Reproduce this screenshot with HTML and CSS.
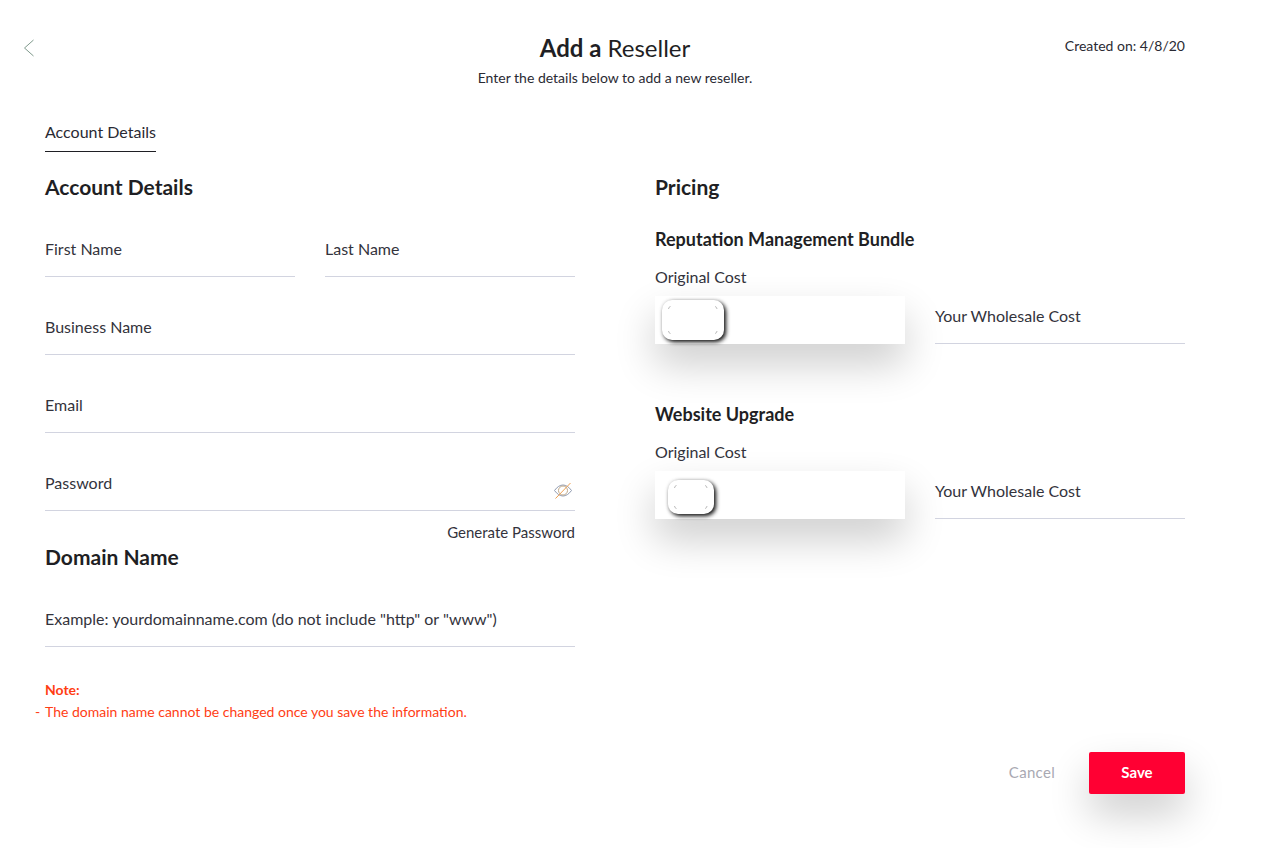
FILE: index.html
```html
<!DOCTYPE html>
<html lang="en">
<head>
<meta charset="utf-8">
<title>Add a Reseller</title>
<link rel="stylesheet" href="styles.css">
</head>
<body>
<div class="page">
  <a class="back" aria-label="Back">
    <svg width="12" height="18" viewBox="0 0 12 18"><path d="M10.500 1 L1.500 9 L10.500 17" fill="none" stroke="#7f9a8c" stroke-width="1"/></svg>
  </a>
  <header class="header">
    <h1 class="title"><b>Add a</b> Reseller</h1>
    <p class="subtitle">Enter the details below to add a new reseller.</p>
    <span class="created">Created on: 4/8/20</span>
  </header>
  <nav class="tabs"><span class="tab">Account Details</span></nav>
  <main class="columns">
    <section class="col">
      <h2 class="h2">Account Details</h2>
      <div class="row two">
        <div class="field">First Name</div>
        <div class="field">Last Name</div>
      </div>
      <div class="row"><div class="field">Business Name</div></div>
      <div class="row"><div class="field">Email</div></div>
      <div class="row">
        <div class="field">Password
          <svg class="eye" width="20" height="18" viewBox="0 0 20 18"><path d="M1.500 9.500 C4 6 7 4 10 4 C13 4 16 6 18.500 9.500 C16 13 13 15 10 15 C7 15 4 13 1.500 9.500 Z" fill="none" stroke="#8f9ab0" stroke-width="1"/><circle cx="10" cy="9.500" r="4.500" fill="none" stroke="#c0a888" stroke-width="1"/><path d="M2.500 17.500 L17.500 2" stroke="#f0a050" stroke-width="1"/></svg>
        </div>
      </div>
      <a class="generate">Generate Password</a>
      <h2 class="h2 domain">Domain Name</h2>
      <div class="row domain-row"><div class="field">Example: yourdomainname.com (do not include "http" or "www")</div></div>
      <div class="note">
        <strong class="note-title">Note:</strong>
        <p class="note-line">The domain name cannot be changed once you save the information.</p>
      </div>
    </section>
    <section class="col">
      <h2 class="h2">Pricing</h2>
      <div class="product">
        <h3 class="h3">Reputation Management Bundle</h3>
        <div class="cost-label">Original Cost</div>
        <div class="cost-row">
          <div class="cost-box">
            <div class="knob knob-a">
              <svg class="marks" viewBox="0 0 62 40" width="62" height="40"><path d="M6.500 9 Q6.500 7 8.500 6.500M53 6.500 Q55 7 55 9M6.500 31 Q6.500 33 8.500 33.500M55 31 Q55 33 53 33.500" fill="none" stroke="#bbb" stroke-width="1"/></svg>
            </div>
          </div>
          <div class="field">Your Wholesale Cost</div>
        </div>
      </div>
      <div class="product second">
        <h3 class="h3">Website Upgrade</h3>
        <div class="cost-label">Original Cost</div>
        <div class="cost-row">
          <div class="cost-box">
            <div class="knob knob-b">
              <svg class="marks" viewBox="0 0 46 34" width="46" height="34"><path d="M6.500 8 Q6.500 6 8.500 5.500M37 5.500 Q39 6 39 8M6.500 26 Q6.500 28 8.500 28.500M39 26 Q39 28 37 28.500" fill="none" stroke="#bbb" stroke-width="1"/></svg>
            </div>
          </div>
          <div class="field">Your Wholesale Cost</div>
        </div>
      </div>
    </section>
  </main>
  <footer class="actions">
    <a class="cancel">Cancel</a>
    <button class="save">Save</button>
  </footer>
</div>
</body>
</html>
```
FILE: styles.css
```css
* { box-sizing: border-box; }
html, body { margin: 0; padding: 0; background: #fff; }
body { font-family: Lato, sans-serif; color: #2a2a33; overflow: hidden; height: 848px; }
.page { position: relative; width: 1140px; margin-left: 45px; padding-top: 33px; }
.back { position: absolute; left: -22px; top: 39px; display: block; line-height: 0; }
.header { position: relative; text-align: center; height: 69px; }
.title { margin: 0; font-size: 24px; line-height: 30px; font-weight: 400; color: #1f1f24; }
.title b { font-weight: 700; }
.subtitle { margin: 5px 0 0; font-size: 14px; line-height: 20px; color: #2a2a33; }
.created { position: absolute; right: 0; top: 4px; font-size: 14px; line-height: 18px; }
.tabs { display: flex; height: 50px; padding-top: 20px; }
.tab { height: 30px; font-size: 16px; line-height: 20px; color: #2a2a33; border-bottom: 1px solid #1f1f24; }
.columns { display: grid; grid-template-columns: 530px 530px; column-gap: 80px; padding-top: 20px; }
.h2 { margin: 0; font-size: 21px; line-height: 30px; font-weight: 700; color: #1f1f24; }
.row { display: block; margin-bottom: 30px; }
.row.two { display: grid; grid-template-columns: 250px 250px; column-gap: 30px; margin-top: 27px; }
.field { position: relative; height: 48px; display: flex; align-items: center; padding-bottom: 8px; font-size: 16px; line-height: 20px; color: #33333c; border-bottom: 1px solid #d2d4e0; }
.eye { position: absolute; right: 2px; bottom: 11px; }
.generate { display: block; text-align: right; margin-top: -19px; font-size: 15px; line-height: 20px; color: #33333c; }
.domain { margin-top: 0; }
.domain-row { margin-top: 27px; margin-bottom: 0; }
.note { margin-top: 32px; color: #ff3d14; font-size: 14px; line-height: 22px; position: relative; }
.note-title { display: block; font-weight: 700; }
.note-line { margin: 0; position: relative; }
.note-line::before { content: "-"; position: absolute; left: -10px; }
.h3 { margin: 0; font-size: 18px; line-height: 24px; font-weight: 700; color: #1f1f24; }
.product { margin-top: 25px; }
.product.second { margin-top: 58px; }
.cost-label { margin-top: 16px; font-size: 16px; line-height: 20px; color: #33333c; }
.cost-row { display: grid; grid-template-columns: 250px 250px; column-gap: 30px; margin-top: 9px; }
.cost-box { height: 48px; background: #fff; box-shadow: 0 20px 40px rgba(0,0,0,.2); position: relative; }
.knob { position: absolute; background: #fff; border-radius: 10px; box-shadow: 2px 2px 4px rgba(0,0,0,.95), 0 0 4px rgba(0,0,0,.1); }
.knob-a { left: 7px; top: 4px; width: 62px; height: 40px; }
.knob-b { left: 13px; top: 9px; width: 46px; height: 34px; }
.marks { display: block; }
.actions { position: absolute; top: 752px; right: 0; display: flex; align-items: center; }
.cancel { font-size: 15px; line-height: 20px; color: #a9a9b2; margin: 0 34px 2px 0; letter-spacing: .3px; }
.save { width: 96px; height: 42px; padding: 0 0 2px; border: 0; border-radius: 2px; background: #ff0033; color: #fff; font-family: Lato, sans-serif; font-size: 15px; font-weight: 700; box-shadow: 0 20px 40px rgba(0,0,0,.2); }
```
